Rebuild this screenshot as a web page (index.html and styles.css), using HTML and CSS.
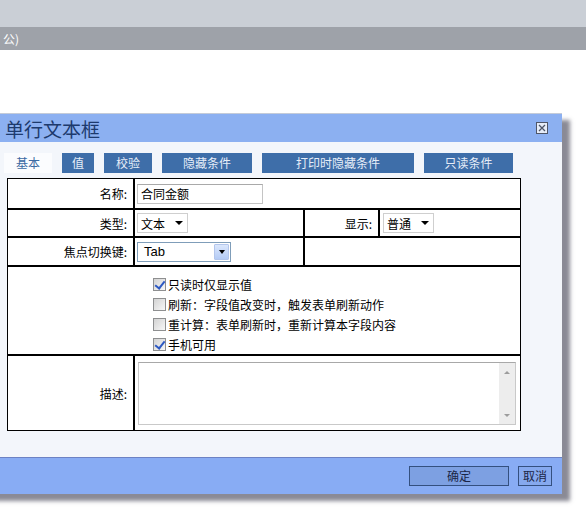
FILE: index.html
```html
<!DOCTYPE html>
<html lang="zh-CN">
<head>
<meta charset="utf-8">
<title>单行文本框</title>
<link rel="stylesheet" href="styles.css">
</head>
<body>
  <div class="topbar"></div>
  <div class="pathbar"><span class="path">公)</span></div>

  <div class="dialog">
    <div class="dlg-head">
      <span class="dlg-title">单行文本框</span>
      <span class="dlg-close">
        <svg width="12" height="12" viewBox="0 0 12 12">
          <rect x="0.5" y="0.5" width="11" height="11" fill="#e6ecf8" stroke="#4f5668"/>
          <path d="M3 3 L9 9 M9 3 L3 9" stroke="#4f5668" stroke-width="1.3"/>
        </svg>
      </span>
    </div>

    <div class="dlg-body">
      <div class="tabs">
        <span class="tab tab-active t-basic">基本</span>
        <span class="tab t-value">值</span>
        <span class="tab t-check">校验</span>
        <span class="tab t-hide">隐藏条件</span>
        <span class="tab t-print">打印时隐藏条件</span>
        <span class="tab t-read">只读条件</span>
      </div>

      <table class="props">
        <colgroup>
          <col class="c1"><col class="c2"><col class="c3"><col class="c4">
        </colgroup>
        <tr class="r-name">
          <td class="lbl">名称:</td>
          <td colspan="3"><span class="txt">合同金额</span></td>
        </tr>
        <tr class="r-type">
          <td class="lbl">类型:</td>
          <td><span class="sel">文本<i class="arrow"></i></span></td>
          <td class="lbl">显示:</td>
          <td><span class="sel sel-show">普通<i class="arrow"></i></span></td>
        </tr>
        <tr class="r-key">
          <td class="lbl">焦点切换键:</td>
          <td><span class="combo"><span class="combo-text">Tab</span><span class="combo-btn"><i class="arrow"></i></span></span></td>
          <td colspan="2"></td>
        </tr>
        <tr class="r-opts">
          <td colspan="4" class="opts">
            <div class="opt"><span class="cb on"></span>只读时仅显示值</div>
            <div class="opt"><span class="cb"></span>刷新：字段值改变时，触发表单刷新动作</div>
            <div class="opt"><span class="cb"></span>重计算：表单刷新时，重新计算本字段内容</div>
            <div class="opt"><span class="cb on"></span>手机可用</div>
          </td>
        </tr>
        <tr class="r-desc">
          <td class="lbl">描述:</td>
          <td colspan="3">
            <div class="memo">
              <div class="memo-area"></div>
              <div class="memo-bar"><i class="up"></i><i class="down"></i></div>
            </div>
          </td>
        </tr>
      </table>
    </div>

    <div class="dlg-foot">
      <button class="btn btn-ok">确定</button>
      <button class="btn btn-cancel">取消</button>
    </div>
  </div>
</body>
</html>
```

FILE: styles.css
```css
* { box-sizing: border-box; }

html, body { margin: 0; padding: 0; }

body {
  width: 586px;
  height: 510px;
  overflow: hidden;
  background: #fff;
  font-family: "Noto Sans CJK SC", "Liberation Sans", sans-serif;
  font-size: 12px;
  color: #000;
}

/* page chrome behind the dialog */
.topbar { height: 27px; background: #cacfd6; }
.pathbar {
  height: 23px;
  background: #9ea2a9;
  color: #fff;
  line-height: 23px;
  white-space: nowrap;
  overflow: hidden;
}
.path { margin-left: 3px; }

/* dialog window */
.dialog {
  margin: 63px 0 0 -20px;
  width: 582px;
  background: #f3f6fb;
  box-shadow: 8px 7px 4px rgba(60, 60, 78, 0.6);
}

.dlg-head {
  height: 29px;
  border-top: 1px solid #c4cbd8;
  background: #8cb0f1;
  display: flex;
  align-items: center;
  justify-content: space-between;
  padding: 0 14px 0 25px;
}
.dlg-title {
  font-size: 19px;
  line-height: 1;
  color: #1d3a6d;
}
.dlg-close { display: block; width: 12px; height: 12px; }
.dlg-close svg { display: block; }

.dlg-body {
  height: 315px;
  padding-top: 11px;
}

/* tab strip */
.tabs {
  display: flex;
  gap: 10px;
  padding-left: 24px;
  height: 20px;
}
.tab {
  display: block;
  height: 20px;
  line-height: 20px;
  text-align: center;
  background: #3e6ea9;
  color: #e6edf8;
}
.tab-active { background: #fbfcfe; color: #3b6aa3; }
.t-basic { width: 48px; }
.t-value { width: 32px; }
.t-check { width: 48px; }
.t-hide  { width: 90px; }
.t-print { width: 152px; }
.t-read  { width: 89px; }

/* property table */
.props {
  margin: 5px 0 0 27px;
  width: 514px;
  table-layout: fixed;
  border-collapse: separate;
  border-spacing: 0;
  border: 1px solid #000;
  background: #fff;
}
.c1 { width: 125px; }
.c2 { width: 170px; }
.c3 { width: 75px; }
.c4 { width: 142px; }

.props td {
  padding: 0;
  border-left: 2px solid #000;
  border-top: 2px solid #000;
  vertical-align: middle;
}
.props td:first-child { border-left: 0; }
.props tr:first-child td { border-top: 0; }

.r-name td { height: 29px; }
.r-type td { height: 28px; }
.r-key td  { height: 29px; }
.r-opts td { height: 88px; }
.r-desc td { height: 76px; }

.lbl {
  text-align: right;
  padding-right: 6px !important;
  white-space: nowrap;
}

/* text field */
.txt {
  display: flex;
  align-items: center;
  margin-left: 2px;
  width: 126px;
  height: 20px;
  padding-left: 3px;
  border: 1px solid #c4c4c4;
  border-top-color: #a9a9a9;
  background: #fff;
}

/* plain dropdowns */
.sel {
  display: flex;
  align-items: center;
  justify-content: space-between;
  margin-left: 2px;
  width: 51px;
  height: 20px;
  padding: 0 4px 0 3px;
  border: 1px solid #cfcfcf;
  background: #fff;
}
.sel-show { margin-left: 3px; }
.arrow {
  display: block;
  width: 0;
  height: 0;
  border-left: 4px solid transparent;
  border-right: 4px solid transparent;
  border-top: 4px solid #000;
}

/* combo box with button */
.combo {
  display: flex;
  align-items: stretch;
  margin-left: 2px;
  width: 94px;
  height: 20px;
  border: 1px solid #7f9db9;
  background: #fff;
  padding: 1px;
}
.combo-text {
  flex: 1;
  display: flex;
  align-items: center;
  padding-left: 5px;
  font-family: "Liberation Sans", sans-serif;
  font-size: 13px;
}
.combo-btn {
  width: 15px;
  display: flex;
  align-items: center;
  justify-content: center;
  border: 1px solid #b3c6ec;
  border-radius: 1px;
  background: linear-gradient(#dbe7fc, #b4cbf5);
}
.combo-btn .arrow {
  border-left-width: 3px;
  border-right-width: 3px;
  border-top-width: 4px;
}

/* option checkboxes */
.props td.opts {
  vertical-align: top;
  padding: 7px 0 0 145px;
}
.opt {
  display: flex;
  align-items: center;
  height: 20px;
  white-space: nowrap;
}
.cb {
  position: relative;
  display: block;
  width: 13px;
  height: 13px;
  margin-right: 2px;
  border: 1px solid #8e8f90;
  background: linear-gradient(135deg, #d3d3d3, #f7f7f7);
}
.cb.on::after {
  content: "";
  position: absolute;
  left: 3px;
  top: 0px;
  width: 4px;
  height: 8px;
  border: solid #2d59c2;
  border-width: 0 2px 2px 0;
  transform: rotate(38deg);
}

/* description memo */
.memo {
  display: flex;
  margin-left: 3px;
  width: 378px;
  height: 63px;
  border: 1px solid #c9c9c9;
  border-top-color: #a8a8a8;
  background: #fff;
}
.memo-area { flex: 1; }
.memo-bar {
  width: 16px;
  background: #ededed;
  display: flex;
  flex-direction: column;
  justify-content: space-between;
  align-items: center;
  padding: 8px 0 7px;
}
.memo-bar i {
  display: block;
  width: 0;
  height: 0;
  border-left: 3px solid transparent;
  border-right: 3px solid transparent;
}
.memo-bar .up { border-bottom: 3px solid #9c9c9c; }
.memo-bar .down { border-top: 3px solid #9c9c9c; }

/* footer buttons */
.dlg-foot {
  height: 37px;
  border-top: 1px solid #6c82c4;
  background: #88acf4;
  display: flex;
  justify-content: flex-end;
  align-items: center;
  gap: 9px;
  padding-right: 10px;
}
.btn {
  height: 20px;
  padding: 0;
  border: 1px solid #34507f;
  background: #7da0e2;
  color: #1b2647;
  font-family: "Noto Sans CJK SC", sans-serif;
  font-size: 12px;
  line-height: 18px;
}
.btn-ok { width: 100px; }
.btn-cancel { width: 34px; background: #86a9ee; }
```
